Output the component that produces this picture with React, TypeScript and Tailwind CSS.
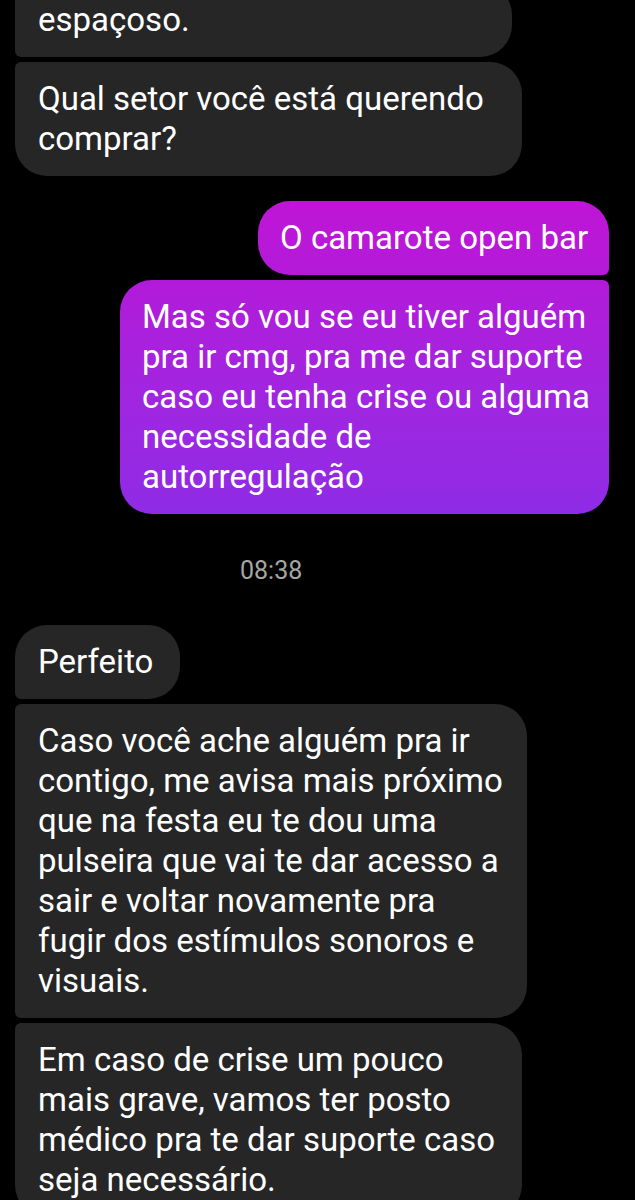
import React from 'react';

const font = { fontFamily: 'Roboto, "Noto Sans", sans-serif' };

type Msg = { lines: string[]; w: string; corners: string };

const Received = ({ lines, w, corners }: Msg) => (
  <div className={`bg-[#262626] text-white ${w} ${corners} pl-[23px] pr-4 py-[17px] text-[33px] leading-[40px]`}>
    {lines.map((l, i) => (
      <div key={i} className="whitespace-nowrap">{l}</div>
    ))}
  </div>
);

const Sent = ({ lines, w, corners, grad }: Msg & { grad: string }) => (
  <div className={`${grad} text-white ${w} ${corners} pl-[22px] pr-4 py-[17px] text-[33px] leading-[40px]`}>
    {lines.map((l, i) => (
      <div key={i} className="whitespace-nowrap">{l}</div>
    ))}
  </div>
);

export default function App() {
  return (
    <div className="bg-black h-[1200px] overflow-hidden" style={font}>
      <div className="flex flex-col">
        {/* received group top */}
        <div className="flex flex-col items-start gap-[5px] pl-[15px]">
          <div className="-mt-[17px]">
            <Received
              lines={['espaçoso.']}
              w="w-[497px]"
              corners="rounded-tl-[6px] rounded-bl-[6px] rounded-tr-[32px] rounded-br-[32px]"
            />
          </div>
          <Received
            lines={['Qual setor você está querendo', 'comprar?']}
            w="w-[507px]"
            corners="rounded-tl-[6px] rounded-bl-[32px] rounded-tr-[32px] rounded-br-[32px]"
          />
        </div>

        {/* sent group */}
        <div className="flex flex-col items-end gap-[5px] pr-[26px] mt-[25px]">
          <Sent
            lines={['O camarote open bar']}
            w="w-[351px]"
            grad="bg-gradient-to-b from-[#bf15d6] to-[#b41ad9]"
            corners="rounded-tl-[32px] rounded-bl-[32px] rounded-tr-[32px] rounded-br-[6px]"
          />
          <Sent
            lines={[
              'Mas só vou se eu tiver alguém',
              'pra ir cmg, pra me dar suporte',
              'caso eu tenha crise ou alguma',
              'necessidade de',
              'autorregulação',
            ]}
            w="w-[489px]"
            grad="bg-gradient-to-b from-[#b21ad9] to-[#8f2be6]"
            corners="rounded-tl-[32px] rounded-bl-[32px] rounded-tr-[6px] rounded-br-[32px]"
          />
        </div>

        {/* timestamp */}
        <div className="mt-[43px] mb-[40px] pl-[240px] text-[25px] leading-[28px] text-[#a6a6a6]">
          08:38
        </div>

        {/* received group bottom */}
        <div className="flex flex-col items-start gap-[5px] pl-[15px]">
          <Received
            lines={['Perfeito']}
            w="w-[165px]"
            corners="rounded-tl-[32px] rounded-bl-[6px] rounded-tr-[32px] rounded-br-[32px]"
          />
          <Received
            lines={[
              'Caso você ache alguém pra ir',
              'contigo, me avisa mais próximo',
              'que na festa eu te dou uma',
              'pulseira que vai te dar acesso a',
              'sair e voltar novamente pra',
              'fugir dos estímulos sonoros e',
              'visuais.',
            ]}
            w="w-[512px]"
            corners="rounded-tl-[6px] rounded-bl-[6px] rounded-tr-[32px] rounded-br-[32px]"
          />
          <Received
            lines={[
              'Em caso de crise um pouco',
              'mais grave, vamos ter posto',
              'médico pra te dar suporte caso',
              'seja necessário.',
            ]}
            w="w-[507px]"
            corners="rounded-tl-[6px] rounded-bl-[32px] rounded-tr-[32px] rounded-br-[32px]"
          />
        </div>
      </div>
    </div>
  );
}
